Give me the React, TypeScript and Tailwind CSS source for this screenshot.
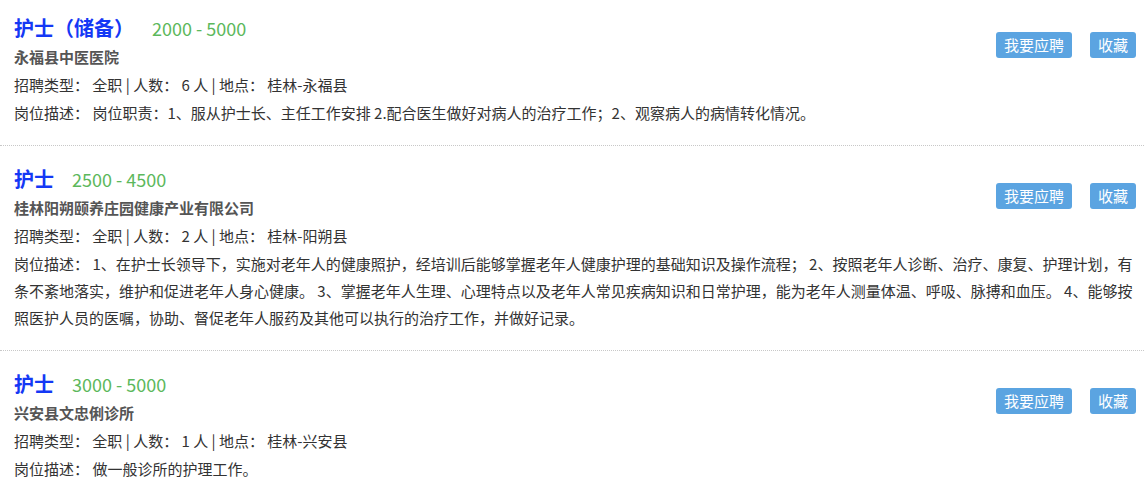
import React from "react";

type Job = {
  title: string;
  salary: string;
  company: string;
  count: number;
  place: string;
  desc: string;
};

const jobs: Job[] = [
  {
    title: "护士（储备）",
    salary: "2000 - 5000",
    company: "永福县中医医院",
    count: 6,
    place: "桂林-永福县",
    desc: "岗位职责：1、服从护士长、主任工作安排 2.配合医生做好对病人的治疗工作；2、观察病人的病情转化情况。",
  },
  {
    title: "护士",
    salary: "2500 - 4500",
    company: "桂林阳朔颐养庄园健康产业有限公司",
    count: 2,
    place: "桂林-阳朔县",
    desc: "1、在护士长领导下，实施对老年人的健康照护，经培训后能够掌握老年人健康护理的基础知识及操作流程； 2、按照老年人诊断、治疗、康复、护理计划，有条不紊地落实，维护和促进老年人身心健康。 3、掌握老年人生理、心理特点以及老年人常见疾病知识和日常护理，能为老年人测量体温、呼吸、脉搏和血压。 4、能够按照医护人员的医嘱，协助、督促老年人服药及其他可以执行的治疗工作，并做好记录。",
  },
  {
    title: "护士",
    salary: "3000 - 5000",
    company: "兴安县文忠俐诊所",
    count: 1,
    place: "桂林-兴安县",
    desc: "做一般诊所的护理工作。",
  },
];

function JobItem({ job, first, last }: { job: Job; first: boolean; last: boolean }) {
  return (
    <div
      className={`pl-[14px] pr-[8px] pb-[19px] ${first ? "pt-[13px]" : "pt-[18px]"} ${
        last ? "" : "border-b border-dotted border-[#c8c8c8]"
      }`}
    >
      <div className="flex items-center">
        <div className="flex-1">
          <div className="flex items-center h-[30px]">
            <span className="text-[20px] font-bold text-[#1438f5]">{job.title}</span>
            <span className="ml-[18px] text-[18px] text-[#5cb85c]">{job.salary}</span>
          </div>
          <div className="h-[28px] leading-[28px] text-[15px] font-bold text-[#555]">{job.company}</div>
        </div>
        <div className="flex gap-[18px] mt-[6px]">
          <button className="h-[26px] px-[8px] rounded-[3px] bg-[#5ba4e1] text-white text-[15px] leading-[26px]">
            我要应聘
          </button>
          <button className="h-[26px] px-[8px] rounded-[3px] bg-[#5ba4e1] text-white text-[15px] leading-[26px]">
            收藏
          </button>
        </div>
      </div>
      <div className="h-[28px] leading-[28px] text-[15px] text-[#333]">
        招聘类型： 全职 | 人数： {job.count} 人 | 地点： {job.place}
      </div>
      <div className="leading-[27px] text-[15px] text-[#333]">
        岗位描述： {job.desc}
      </div>
    </div>
  );
}

export default function App() {
  return (
    <div
      className="w-[1144px] h-[485px] overflow-hidden bg-white"
      style={{ fontFamily: '"Noto Sans CJK SC", "Noto Sans", sans-serif' }}
    >
      {jobs.map((job, i) => (
        <JobItem key={i} job={job} first={i === 0} last={i === jobs.length - 1} />
      ))}
    </div>
  );
}
